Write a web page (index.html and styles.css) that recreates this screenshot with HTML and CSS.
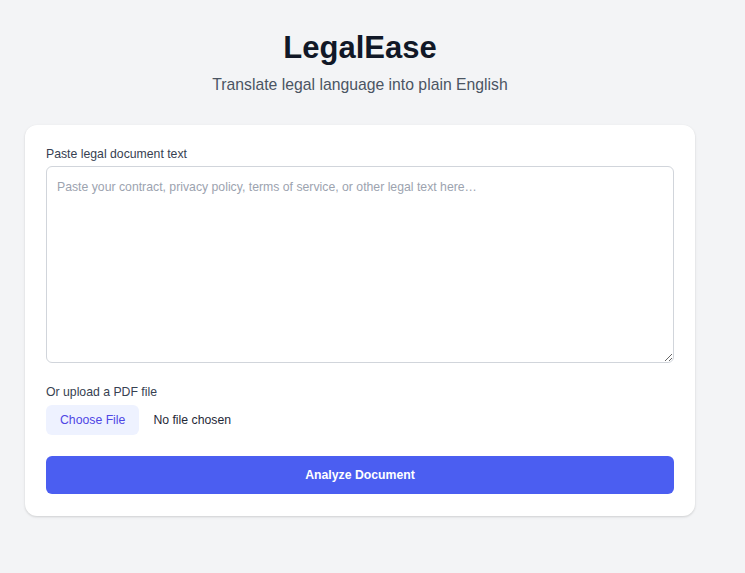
FILE: index.html
```html
<!DOCTYPE html>
<html lang="en">
<head>
    <meta charset="UTF-8">
    <meta name="viewport" content="width=device-width, initial-scale=1.0">
    <title>LegalEase</title>
    <link rel="stylesheet" href="styles.css">
</head>
<body>
    <div class="container">
        <header class="header">
            <h1>LegalEase</h1>
            <p>Translate legal language into plain English</p>
        </header>
        <form class="card">
            <label class="label" for="doc">Paste legal document text</label>
            <textarea id="doc" class="doc-input" placeholder="Paste your contract, privacy policy, terms of service, or other legal text here…"></textarea>
            <label class="label upload-label" for="pdf">Or upload a PDF file</label>
            <input id="pdf" class="file-input" type="file" accept=".pdf">
            <button type="button" class="analyze-btn">Analyze Document</button>
        </form>
    </div>
</body>
</html>
```

FILE: styles.css
```css
*{
    margin: 0;
    padding: 0;
    box-sizing: border-box;
}
body{
    min-height: 100vh;
    background-color: #f3f4f6;
    font-family: "Liberation Sans", Arial, sans-serif;
    color: #1f2937;
}
.container{
    width: 670px;
    margin-left: 25px;
    padding-top: 29px;
}
.header{
    text-align: center;
    margin-bottom: 29px;
}
.header h1{
    font-size: 31px;
    line-height: 38px;
    font-weight: 700;
    color: #111827;
}
.header p{
    margin-top: 7px;
    font-size: 15.75px;
    line-height: 22px;
    color: #4b5563;
}
.card{
    display: flex;
    flex-direction: column;
    background-color: #fff;
    border-radius: 12px;
    padding: 21px 21px 22px;
    box-shadow: 0 1px 3px rgba(0, 0, 0, .1), 0 1px 2px rgba(0, 0, 0, .06);
}
.label{
    font-size: 12.25px;
    line-height: 16px;
    color: #374151;
    margin-bottom: 4px;
}
.doc-input{
    height: 197px;
    padding: 11px 10px;
    border: 1px solid #d1d5db;
    border-radius: 6px;
    font-family: inherit;
    font-size: 12.25px;
    line-height: 18px;
    color: #111827;
    resize: vertical;
}
.doc-input::placeholder{
    color: #9ca3af;
}
.upload-label{
    margin-top: 21px;
    margin-bottom: 5px;
}
.file-input{
    font-family: inherit;
    font-size: 12.25px;
    color: #1f2937;
}
.file-input::file-selector-button{
    font-family: inherit;
    font-size: 12.25px;
    color: #4f46e5;
    background-color: #eef2ff;
    border: none;
    border-radius: 6px;
    padding: 8px 14px;
    height: 30px;
    margin-right: 14px;
    cursor: pointer;
}
.analyze-btn{
    margin-top: 21px;
    height: 38px;
    border: none;
    border-radius: 6px;
    background-color: #4b5ef1;
    color: #fff;
    font-family: inherit;
    font-size: 12.25px;
    font-weight: 700;
    cursor: pointer;
}
```
